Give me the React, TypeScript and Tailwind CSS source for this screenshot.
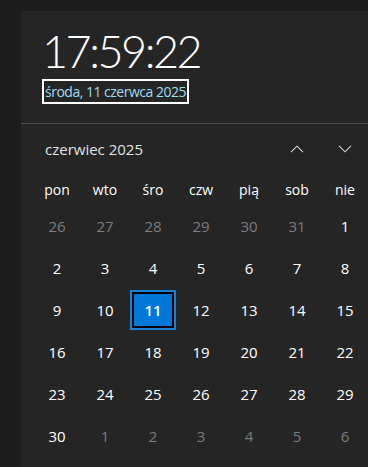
import React from "react";

type Day = { n: number; cur: boolean };

function buildDays(): Day[] {
  const d: Day[] = [];
  for (let i = 26; i <= 31; i++) d.push({ n: i, cur: false });
  for (let i = 1; i <= 30; i++) d.push({ n: i, cur: true });
  for (let i = 1; i <= 6; i++) d.push({ n: i, cur: false });
  return d;
}

const weekdays = ["pon", "wto", "śro", "czw", "pią", "sob", "nie"];

function Chevron({ up }: { up?: boolean }) {
  return (
    <svg width="14" height="8" viewBox="0 0 14 8" fill="none">
      <path
        d={up ? "M1 7.2 L7 1.2 L13 7.2" : "M1 0.8 L7 6.8 L13 0.8"}
        stroke="#d6d6d6"
        strokeWidth="1.1"
      />
    </svg>
  );
}

export default function App() {
  const days = buildDays();
  return (
    <div
      className="w-[368px] h-[467px] overflow-hidden bg-[#1d1d1d] pl-[21px] pt-[11px]"
      style={{ fontFamily: '"Open Sans", "Noto Sans", sans-serif' }}
    >
      <div className="h-full w-[360px] bg-[#252525]">
        <div className="pl-[21px] pt-[17px]">
          <div
            className="text-[45px] leading-[46px] font-light text-white tracking-[-2.5px]"
            style={{ fontFamily: 'Lato, "Open Sans", sans-serif' }}
          >
            17:59:22
          </div>
          <div className="mt-[5px] inline-block border-2 border-white pl-[1px] pr-[1px] text-[14px] leading-[21px] text-[#9fdcf2] tracking-[-0.5px]">
            środa, 11 czerwca 2025
          </div>
        </div>
        <div className="mt-[19px] h-px bg-[#4e4e4e]" />
        <div className="pl-[12px]">
          <div className="mt-[15px] flex w-[336px] items-center h-[20px]">
            <div className="flex-1 pl-[12px] text-[15px] text-[#e2e2e2]">czerwiec 2025</div>
            <div className="w-[48px] flex justify-center">
              <Chevron up />
            </div>
            <div className="w-[48px] flex justify-center">
              <Chevron />
            </div>
          </div>
          <div className="mt-[14px] grid grid-cols-[repeat(7,48px)]">
            {weekdays.map((w) => (
              <div key={w} className="h-[32px] flex items-center justify-center text-[14px] text-white">
                {w}
              </div>
            ))}
            {days.map((d, i) => {
              const sel = d.cur && d.n === 11;
              return (
                <div key={i} className="h-[42px] flex items-center justify-center">
                  {sel ? (
                    <div className="w-[46px] h-[40px] border-2 border-[#1683d8] bg-black p-[2px]">
                      <div className="h-full w-full bg-[#0078d7] flex items-center justify-center text-[15px] font-semibold text-white">
                        11
                      </div>
                    </div>
                  ) : (
                    <span className={"text-[15px] " + (d.cur ? "text-white" : "text-[#7c7c7c]")}>{d.n}</span>
                  )}
                </div>
              );
            })}
          </div>
        </div>
      </div>
    </div>
  );
}
